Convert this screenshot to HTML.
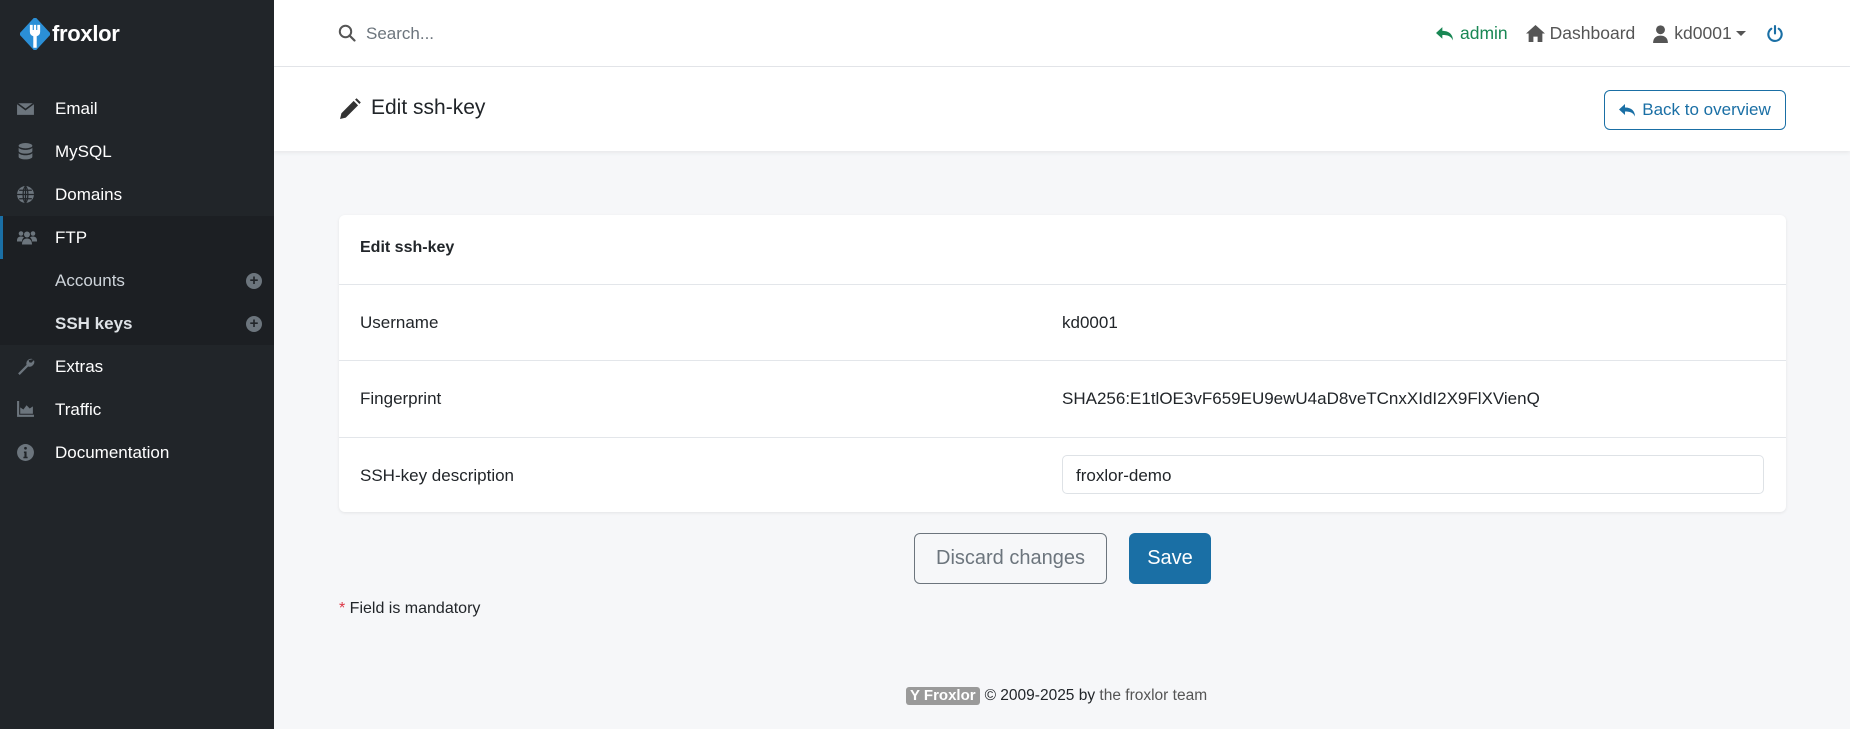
<!DOCTYPE html>
<html><head><meta charset="utf-8">
<style>
*{box-sizing:border-box;margin:0;padding:0}
body{width:1850px;height:729px;overflow:hidden;font-family:"Liberation Sans",sans-serif;background:#f6f7f9;color:#212529;position:relative;font-size:17px}
.sb{position:absolute;left:0;top:0;width:274px;height:729px;background:#212529}
.logo{position:absolute;left:20px;top:18px;display:flex;align-items:center}
.logo span{color:#fff;font-weight:bold;font-size:22px;margin-left:2px;letter-spacing:-0.3px}
.mi{position:absolute;left:0;width:274px;height:43px;display:flex;align-items:center;color:#fff;font-size:17px}
.mi .ic{position:absolute;left:16px;top:12px;width:19px;height:19px}
.mi .t{position:absolute;left:55px}
.sub{background:#1c1f23}
.plus{position:absolute;left:246px;top:14px;width:16px;height:16px;border-radius:50%;background:#6c757d;color:#212529;font-size:15px;line-height:16px;text-align:center;font-weight:bold}
.top{position:absolute;left:274px;top:0;right:0;height:67px;background:#fff;border-bottom:1px solid #e3e6ea}
.ph{position:absolute;left:274px;top:67px;right:0;height:84px;background:#fff;box-shadow:0 2px 4px rgba(0,0,0,.06)}
.card{position:absolute;left:339px;top:215px;width:1447px;height:297px;background:#fff;border-radius:6px;box-shadow:0 1px 3px rgba(0,0,0,.08)}
.row{position:absolute;left:0;width:100%;border-top:1px solid #e3e6ea}
.lab{position:absolute;left:21px}
.val{position:absolute;left:723px}
.btn{position:absolute;border-radius:6px;font-size:20px;display:flex;align-items:center;justify-content:center}
</style></head><body>
<div class="sb">
 <div class="logo">
  <svg width="30" height="32" viewBox="0 0 26 28"><path d="M13 1 L25 14 L13 27 L1 14 Z" fill="#2b8fd6" stroke="#2b8fd6" stroke-width="3" stroke-linejoin="round"/><path d="M8.5 6 v6 q0 3 3 4 v10 h3 v-10 q3-1 3-4 v-6 h-2.5 v4.5 h-1 v-4.5 h-2 v4.5 h-1 v-4.5z" fill="#fff"/></svg>
  <span>froxlor</span>
 </div>
 <div class="mi" style="top:87px"><svg class="ic" viewBox="0 0 18 18"><path d="M1 4h16v11H1z" fill="#6c757d"/><path d="M1 4l8 6 8-6" stroke="#212529" stroke-width="1.5" fill="none"/></svg><span class="t">Email</span></div>
 <div class="mi" style="top:130px"><svg class="ic" viewBox="0 0 18 18"><ellipse cx="9" cy="3.5" rx="6.5" ry="2.5" fill="#6c757d"/><path d="M2.5 5.5v3c0 1.5 3 2.5 6.5 2.5s6.5-1 6.5-2.5v-3c-1 1.3-3.5 2-6.5 2s-5.5-.7-6.5-2zM2.5 10.5v3.5c0 1.5 3 2.5 6.5 2.5s6.5-1 6.5-2.5v-3.5c-1 1.3-3.5 2-6.5 2s-5.5-.7-6.5-2z" fill="#6c757d"/></svg><span class="t">MySQL</span></div>
 <div class="mi" style="top:173px"><svg class="ic" viewBox="0 0 18 18"><circle cx="9" cy="9" r="8" fill="#6c757d"/><path d="M1 9h16M9 1v16M3 5h12M3 13h12M9 1c-3 3-3 13 0 16M9 1c3 3 3 13 0 16" stroke="#212529" stroke-width="1.2" fill="none"/></svg><span class="t">Domains</span></div>
 <div class="mi sub" style="top:216px"><div style="position:absolute;left:0;top:0;width:3px;height:43px;background:#1a6fa5"></div><svg class="ic" viewBox="0 0 22 18" style="width:22px"><circle cx="5" cy="5" r="2.3" fill="#6c757d"/><circle cx="17" cy="5" r="2.3" fill="#6c757d"/><circle cx="11" cy="6" r="3" fill="#6c757d"/><path d="M1 12c0-3 2-4 4-4s3 1 3 1-2 1-2 4H1zM21 12c0-3-2-4-4-4s-3 1-3 1 2 1 2 4h5zM6 16c0-4 2-6 5-6s5 2 5 6z" fill="#6c757d"/></svg><span class="t">FTP</span></div>
 <div class="mi sub" style="top:259px"><span class="t" style="color:#ced4da">Accounts</span><div class="plus">+</div></div>
 <div class="mi sub" style="top:302px"><span class="t" style="color:#dee2e6;font-weight:bold">SSH keys</span><div class="plus">+</div></div>
 <div class="mi" style="top:345px"><svg class="ic" viewBox="0 0 18 18"><path d="M16 2a4.5 4.5 0 0 0-6 5.5L2 15.5 3.5 17l8-8A4.5 4.5 0 0 0 17 3l-2.5 2.5-2-.5-.5-2z" fill="#6c757d"/></svg><span class="t">Extras</span></div>
 <div class="mi" style="top:388px"><svg class="ic" viewBox="0 0 18 18"><path d="M1 1v15h16v-2H3V1z" fill="#6c757d"/><path d="M4 13v-6l3 2 3-4 3 3 3-2v7z" fill="#6c757d"/></svg><span class="t">Traffic</span></div>
 <div class="mi" style="top:431px"><svg class="ic" viewBox="0 0 18 18"><circle cx="9" cy="9" r="8" fill="#6c757d"/><circle cx="9" cy="5" r="1.3" fill="#212529"/><path d="M7.5 8h2.5v5h1v1.5h-4V13h1v-3.5h-.5z" fill="#212529"/></svg><span class="t">Documentation</span></div>
</div>
<div class="top">
 <svg style="position:absolute;left:64px;top:24px" width="18" height="18" viewBox="0 0 18 18"><circle cx="7.5" cy="7.5" r="5.7" stroke="#555" stroke-width="2" fill="none"/><path d="M11.5 11.5l5 5" stroke="#555" stroke-width="2.2" stroke-linecap="round"/></svg>
 <span style="position:absolute;left:92px;top:24px;color:#6c757d;font-size:17px">Search...</span>
 <div style="position:absolute;left:1162px;top:23px;display:flex;align-items:center;font-size:17.5px;white-space:nowrap">
  <svg width="18" height="16" viewBox="0 0 17 15"><path d="M6 1L0 6.5 6 12V8.5c5 0 8 1 10 5 0-5-3-9-10-9z" fill="#198754"/></svg>
  <span style="color:#198754;margin-left:6px">admin</span>
  <svg style="margin-left:18px" width="19" height="17" viewBox="0 0 18 16"><path d="M9 0L0 8h2.5v8h4.5v-5h4v5h4.5V8H18z" fill="#555"/></svg>
  <span style="color:#555;margin-left:5px">Dashboard</span>
  <svg style="margin-left:18px" width="15" height="18" viewBox="0 0 14 17"><circle cx="7" cy="4.5" r="4.2" fill="#555"/><path d="M0 17c0-5 3-7 7-7s7 2 7 7z" fill="#555"/></svg>
  <span style="color:#555;margin-left:6px">kd0001</span>
  <span style="margin-left:4px;border-left:5px solid transparent;border-right:5px solid transparent;border-top:5px solid #555;width:0;height:0"></span>
  <svg style="margin-left:20px" width="18" height="18" viewBox="0 0 17 17"><path d="M5 3.5a6.3 6.3 0 1 0 7 0" stroke="#1a6fa5" stroke-width="2" fill="none" stroke-linecap="round"/><path d="M8.5 1v7" stroke="#1a6fa5" stroke-width="2" stroke-linecap="round"/></svg>
 </div>
</div>
<div class="ph">
 <svg style="position:absolute;left:65px;top:31px" width="22" height="22" viewBox="0 0 21 21"><path d="M1 20l1.3-5.5L14 2.8l4.2 4.2L6.5 18.7z M15.3 1.5l1.5-1.3 4 4-1.3 1.5z" fill="#333"/></svg>
 <span style="position:absolute;left:97px;top:29px;font-size:21px;color:#212529">Edit ssh-key</span>
 <div style="position:absolute;left:1330px;top:23px;width:182px;height:40px;border:1px solid #1a6fa5;border-radius:6px;color:#1a6fa5;font-size:17px;display:flex;align-items:center;justify-content:center"><svg width="17" height="15" viewBox="0 0 17 15" style="margin-right:6px"><path d="M6 1L0 6.5 6 12V8.5c5 0 8 1 10 5 0-5-3-9-10-9z" fill="#1a6fa5"/></svg>Back to overview</div>
</div>
<div class="card">
 <span style="position:absolute;left:21px;top:24px;font-weight:bold;font-size:16px">Edit ssh-key</span>
 <div class="row" style="top:69px;height:76px"><span class="lab" style="top:28px">Username</span><span class="val" style="top:28px">kd0001</span></div>
 <div class="row" style="top:145px;height:77px"><span class="lab" style="top:28px">Fingerprint</span><span class="val" style="top:28px">SHA256:E1tlOE3vF659EU9ewU4aD8veTCnxXIdI2X9FlXVienQ</span></div>
 <div class="row" style="top:222px;height:75px"><span class="lab" style="top:28px">SSH-key description</span>
  <div style="position:absolute;left:723px;top:17px;width:702px;height:39px;border:1px solid #dee2e6;border-radius:5px;padding:10px 0 0 13px">froxlor-demo</div></div>
</div>
<div class="btn" style="left:914px;top:533px;width:193px;height:51px;border:1px solid #6c757d;color:#6c757d">Discard changes</div>
<div class="btn" style="left:1129px;top:533px;width:82px;height:51px;background:#1a6fa5;color:#fff">Save</div>
<div style="position:absolute;left:339px;top:600px;font-size:16px"><span style="color:#dc3545">*</span> Field is mandatory</div>
<div style="position:absolute;left:906px;top:687px;display:flex;align-items:center;font-size:15.5px;white-space:nowrap">
 <span style="background:#9a9a9a;color:#fff;font-weight:bold;border-radius:3px;padding:0 4px;font-size:15px;height:18px;line-height:18px">Y Froxlor</span>
 <span style="margin-left:5px;color:#212529">© 2009-2025 by <span style="color:#555">the froxlor team</span></span>
</div>
</body></html>
